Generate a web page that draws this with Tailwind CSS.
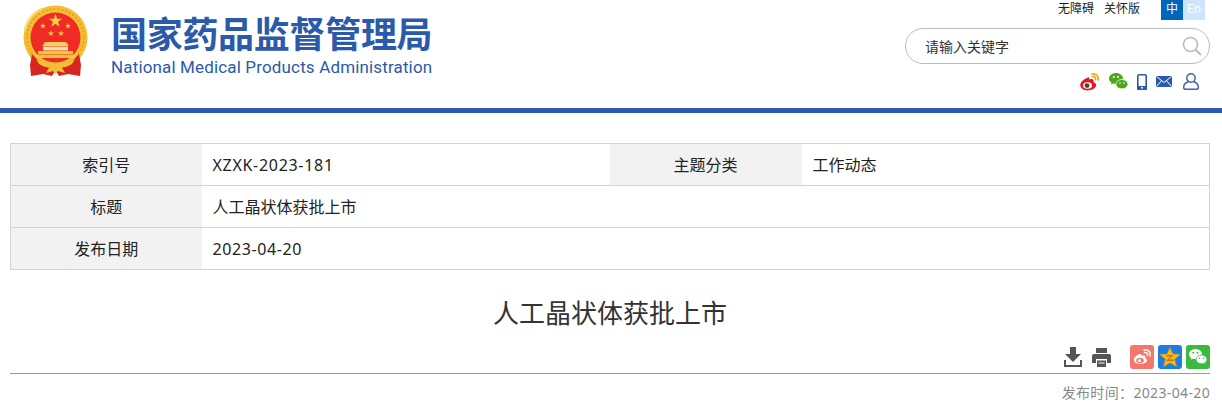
<!DOCTYPE html>
<html lang="zh-CN">
<head>
  <meta charset="UTF-8" />
  <title>人工晶状体获批上市</title>
  <script src="https://cdn.jsdelivr.net/npm/@tailwindcss/browser@4"></script>
</head>
<body class="bg-white text-[#333] font-['Noto_Sans','Noto_Sans_CJK_SC',sans-serif] overflow-hidden">

  <!-- HEADER -->
  <header class="h-[113px] border-b-[5px] border-[#2b5aaa] flex justify-between">
    <div class="flex items-start pl-[22px] pt-[5px]">
      <svg class="w-[68px] h-[72px] shrink-0" viewBox="0 0 68 72">
        <defs>
          <polygon id="star" points="0,-1 .225,-.309 .951,-.309 .363,.118 .588,.809 0,.382 -.588,.809 -.363,.118 -.951,-.309 -.225,-.309"/>
        </defs>
        <!-- ring -->
        <circle cx="33.500" cy="32.500" r="32" fill="#f3bd36"/>
        <circle cx="33.500" cy="32.500" r="28.500" fill="none" stroke="#e59f1f" stroke-width="1.500" stroke-dasharray="2 2"/>
        <path d="M2.500 26 A32 32 0 0 1 20 3.500" fill="none" stroke="#f9db7c" stroke-width="2"/>
        <!-- ribbons -->
        <path d="M10 49 L8 60 L9 71 L21 69 L30 71 L33.500 65 L37 71 L46 69 L58 71 L59 60 L57 49 Q48 61 33.500 61 Q19 61 10 49 Z" fill="#d8251f"/>
        <circle cx="33.500" cy="32.500" r="25" fill="#ee2c25"/>
        <use href="#star" transform="translate(33.500 16) scale(7)" fill="#fbd03f"/>
        <use href="#star" transform="translate(21 21) scale(3.200)" fill="#fbd03f"/>
        <use href="#star" transform="translate(46 21) scale(3.200)" fill="#fbd03f"/>
        <use href="#star" transform="translate(29 28.500) scale(3.200)" fill="#fbd03f"/>
        <use href="#star" transform="translate(39 28.500) scale(3.200)" fill="#fbd03f"/>
        <!-- gate -->
        <path d="M23 37 h21 l3 4 h-27 Z" fill="#f8d05a"/>
        <path d="M21 41.500 h25 v4 h-25 Z" fill="#fbe39a"/>
        <path d="M16 46 h35 v3 h-35 Z M12.500 49.500 h42 l-2 3.500 h-38 Z" fill="#f7c53c"/>
        <!-- wreath bottom -->
        <path d="M14 54 Q22 58.500 33.500 58.500 Q45 58.500 53 54 L50 59 Q44 62.500 40 62.500 L43 68 L36 66 L33.500 69 L31 66 L24 68 L27 62.500 Q23 62.500 17 59 Z" fill="#f3bd36"/>
      </svg>
      <div class="ml-[21px] pt-[6px] w-[325px]">
        <div class="text-[36px] leading-[43px] font-bold text-[#2b5aaa] whitespace-nowrap tracking-[-0.3px] font-['Noto_Sans_CJK_SC',sans-serif]">国家药品监督管理局</div>
        <div class="mt-[3px] text-[17px] leading-[20px] text-[#2b5aaa] whitespace-nowrap font-['Roboto',sans-serif] tracking-[0.15px]">National Medical Products Administration</div>
      </div>
    </div>

    <div class="w-[317px] pr-[12px] flex flex-col items-end">
      <div class="flex items-start h-[20px] pr-[5px] text-[12px] leading-[18px] text-[#222]">
        <a class="mr-[10px]">无障碍</a>
        <a class="mr-[21px]">关怀版</a>
        <span class="w-[22px] h-[20px] text-center bg-[#0066bb] text-white">中</span>
        <span class="w-[22px] h-[20px] text-center bg-[#cce6ff] text-white">En</span>
      </div>
      <div class="mt-[8px] w-[305px] h-[36px] border border-[#bbb] rounded-full flex items-center justify-between pl-[19px] pr-[7px]">
        <span class="text-[14px] leading-[20px] pt-[1px] text-[#333]">请输入关键字</span>
        <svg class="w-[20px] h-[20px]" viewBox="0 0 20 20" fill="none" stroke="#bcbcbc">
          <circle cx="8.500" cy="8.500" r="7" stroke-width="1.600"/>
          <path d="M13.500 13.500 L19 19" stroke-width="2"/>
        </svg>
      </div>
      <div class="mt-[8px] pr-[11px] flex items-center gap-[9px] h-[19px]">
        <!-- weibo -->
        <svg class="w-[20px] h-[19px]" viewBox="0 0 20 19">
          <path d="M8 5.500 C3.500 7 0 10.500 .3 13.500 C.7 17 5 18.800 9 18.300 C13.800 17.800 16.500 15 16 12.500 C15.700 11 14.300 10.500 13.500 10.300 C14.300 8 12.800 6.500 10 7.300 C9.500 7.500 9.200 7.500 9 7.200 C9.400 5.500 9 5 8 5.500 Z" fill="#e6161d"/>
          <ellipse cx="7.500" cy="13.500" rx="4.500" ry="3.300" fill="#fff"/>
          <circle cx="7" cy="13.600" r="2.400" fill="#444"/>
          <path d="M12 2 C16 1 19 4 18 8 M12.500 4.500 C14.500 4 16 5.500 15.500 7.500" fill="none" stroke="#eea81d" stroke-width="1.800" stroke-linecap="round"/>
        </svg>
        <!-- wechat -->
        <svg class="w-[19px] h-[17px]" viewBox="0 0 19 17">
          <path d="M7 0 C3 0 0 2.500 0 5.500 C0 7.200 1 8.700 2.500 9.700 L2 11.500 L4.200 10.500 C5 10.800 6 11 7 11 C11 11 14 8.500 14 5.500 C14 2.500 11 0 7 0 Z" fill="#4ca71d"/>
          <path d="M13 6.500 C9.500 6.500 7 8.700 7 11.200 C7 13.800 9.500 15.800 13 15.800 C13.700 15.800 14.400 15.700 15 15.500 L17 16.500 L16.500 14.800 C18 13.800 19 12.600 19 11.200 C19 8.700 16.300 6.500 13 6.500 Z" fill="#4ca71d" stroke="#fff" stroke-width=".8"/>
          <circle cx="4.800" cy="4" r="1" fill="#fff"/><circle cx="9" cy="4" r="1" fill="#fff"/>
          <circle cx="11" cy="10" r=".8" fill="#fff"/><circle cx="15" cy="10" r=".8" fill="#fff"/>
        </svg>
        <!-- phone -->
        <svg class="w-[10px] h-[16px]" viewBox="0 0 10 16">
          <rect x=".8" y=".8" width="8.400" height="14.400" rx="1.300" fill="#fff" stroke="#2b5aaa" stroke-width="1.600"/>
          <rect x="0" y="12" width="10" height="4" rx="1" fill="#2b5aaa"/>
          <circle cx="5" cy="13.800" r="1" fill="#fff"/>
        </svg>
        <!-- mail -->
        <svg class="w-[16px] h-[11px]" viewBox="0 0 16 11">
          <rect width="16" height="11" rx=".5" fill="#2b5aaa"/>
          <path d="M.5 .5 L8 6.500 L15.500 .5 M.5 10.500 L5.500 4.800 M15.500 10.500 L10.500 4.800" fill="none" stroke="#fff" stroke-width="1"/>
        </svg>
        <!-- user -->
        <svg class="w-[16px] h-[17px] ml-[2px]" viewBox="0 0 16 17" fill="none" stroke="#3c62ab" stroke-width="1.500">
          <circle cx="8" cy="5" r="4.200"/>
          <path d="M5.500 8.800 C2.500 9.500 .7 11.500 .7 14.500 C.7 15.600 1.400 16.300 2.500 16.300 H13.500 C14.600 16.300 15.300 15.600 15.300 14.500 C15.300 11.500 13.500 9.500 10.500 8.800"/>
        </svg>
      </div>
    </div>
  </header>

  <main class="pl-[10px] pr-[12px] pt-[30px]">
    <!-- INFO TABLE -->
    <table class="w-[1200px] table-fixed border-collapse border border-[#d3d3d3] text-[16px] text-[#222]">
      <colgroup>
        <col class="w-[191px]"/><col class="w-[408px]"/><col class="w-[192px]"/><col/>
      </colgroup>
      <tbody>
        <tr class="h-[42px] border-b border-[#d3d3d3]">
          <th class="bg-[#f2f2f2] font-normal">索引号</th>
          <td class="pl-[11px] tracking-[0.7px]">XZXK-2023-181</td>
          <th class="bg-[#f2f2f2] font-normal">主题分类</th>
          <td class="pl-[11px]">工作动态</td>
        </tr>
        <tr class="h-[42px] border-b border-[#d3d3d3]">
          <th class="bg-[#f2f2f2] font-normal">标题</th>
          <td class="pl-[11px]" colspan="3">人工晶状体获批上市</td>
        </tr>
        <tr class="h-[42px]">
          <th class="bg-[#f2f2f2] font-normal">发布日期</th>
          <td class="pl-[11px] tracking-[0.6px]" colspan="3">2023-04-20</td>
        </tr>
      </tbody>
    </table>

    <h1 class="mt-[24px] text-center text-[26px] leading-[38px] font-normal text-[#333]">人工晶状体获批上市</h1>

    <!-- TOOLS -->
    <div class="mt-[12px] h-[29px] flex justify-end items-start border-b border-[#999] box-content">
      <svg class="w-[18px] h-[20px] mt-[3px]" viewBox="0 0 18 20" fill="#555">
        <path d="M6 0 h6 v7 h5 l-8 8 l-8 -8 h5 Z"/>
        <path d="M0 13 h2 v5 h14 v-5 h2 v7 h-18 Z"/>
      </svg>
      <svg class="w-[19px] h-[19px] mt-[4px] ml-[10px]" viewBox="0 0 19 19" fill="#555">
        <path d="M4 0 h11 v5 h-11 Z"/>
        <path d="M2 6 h15 a2 2 0 0 1 2 2 v7 h-4 v-4 h-11 v4 h-4 v-7 a2 2 0 0 1 2 -2 Z"/>
        <path d="M5 12.500 h9 v6.500 h-9 Z M6.500 14.500 v1 h6 v-1 Z"/>
      </svg>
      <!-- share: weibo -->
      <svg class="w-[24px] h-[24px] mt-[1px] ml-[19px]" viewBox="0 0 24 24">
        <rect width="24" height="24" rx="3" fill="#f5776c"/>
        <path d="M10 9 C6 10 3.500 13 4 15.500 C4.500 18 8 19.500 11.500 19 C15 18.500 17.500 16.800 17 14.800 C16.800 13.800 15.800 13.300 15.200 13.200 C16 11.500 15 10 12.500 10.800 C12 11 11.500 11 11.500 10.500 C11.700 9.300 11 8.700 10 9 Z" fill="#fff"/>
        <ellipse cx="10" cy="15.500" rx="3.800" ry="2.800" fill="#f5776c"/>
        <circle cx="9.500" cy="15.500" r="1.500" fill="#fff"/>
        <path d="M14 5 C18 4 21 7 20 11 M14.500 7.500 C16.500 7 18 8.500 17.500 10.500" fill="none" stroke="#fff" stroke-width="1.500" stroke-linecap="round"/>
      </svg>
      <!-- share: qzone -->
      <svg class="w-[24px] h-[24px] mt-[1px] ml-[4px]" viewBox="0 0 24 24">
        <rect width="24" height="24" rx="3" fill="#1b7fe0"/>
        <polygon points="12,2.500 14.800,9 22,9.500 16.500,14.300 18.500,21.500 12,17.800 5.500,21.500 7.500,14.300 2,9.500 9.200,9" fill="#f9b91a" stroke="#e89612" stroke-width=".6"/>
        <path d="M8.500 10 h7 l-4.500 4.500 h4.500 v1.500 h-7.500 l4.500 -4.500 h-4 Z" fill="#c9701a"/>
      </svg>
      <!-- share: wechat -->
      <svg class="w-[24px] h-[24px] mt-[1px] ml-[4px]" viewBox="0 0 24 24">
        <rect width="24" height="24" rx="3" fill="#3cba3f"/>
        <path d="M9.500 4 C6 4 3 6.300 3 9.200 C3 10.800 4 12.200 5.300 13.100 L4.800 14.800 L7 13.800 C7.800 14.100 8.600 14.300 9.500 14.300 C13 14.300 16 12 16 9.200 C16 6.300 13 4 9.500 4 Z" fill="#fff"/>
        <path d="M15.500 10 C12.500 10 10 12 10 14.400 C10 16.800 12.500 18.700 15.500 18.700 C16.100 18.700 16.700 18.600 17.300 18.500 L19.200 19.500 L18.700 17.800 C20 16.900 21 15.700 21 14.400 C21 12 18.500 10 15.500 10 Z" fill="#fff" stroke="#3cba3f" stroke-width=".8"/>
        <circle cx="7.300" cy="7.700" r="1" fill="#3cba3f"/><circle cx="11.500" cy="7.700" r="1" fill="#3cba3f"/>
        <circle cx="13.500" cy="13.200" r=".8" fill="#3cba3f"/><circle cx="17.500" cy="13.200" r=".8" fill="#3cba3f"/>
      </svg>
    </div>

    <div class="mt-[8px] text-right text-[14px] leading-[20px] text-[#888] tracking-[0.35px]">发布时间<span class="font-['Noto_Sans_CJK_TC',sans-serif]">：</span>2023-04-20</div>
  </main>

</body>
</html>
